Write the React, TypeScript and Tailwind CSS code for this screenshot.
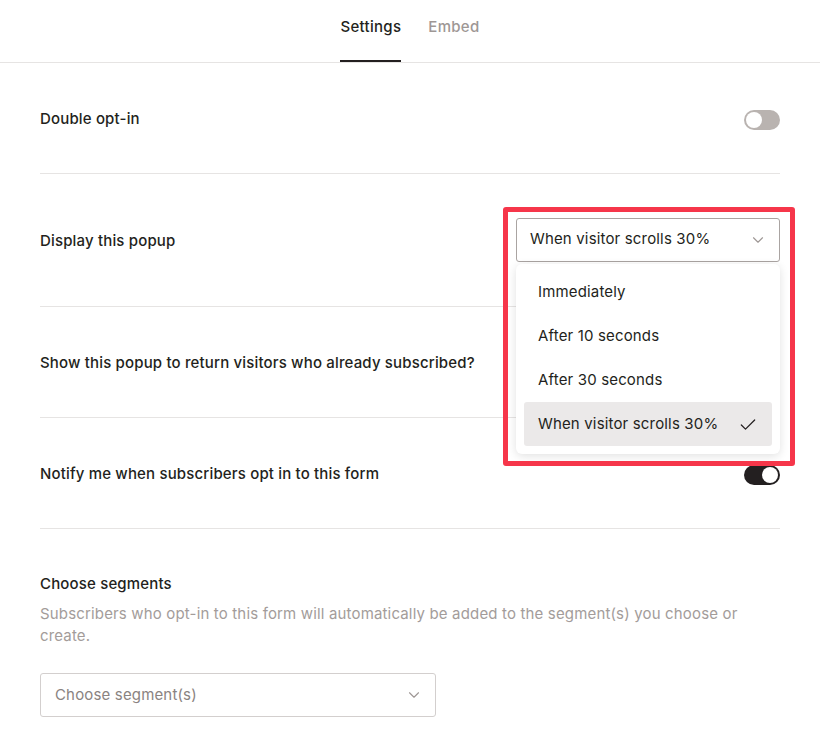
import { Check, ChevronDown } from 'lucide-react'

const font = { fontFamily: 'Inter, "Noto Sans", sans-serif' }

function Toggle({ on }: { on: boolean }) {
  return (
    <span
      className={`relative inline-flex h-5 w-9 shrink-0 items-center rounded-full ${
        on ? 'bg-[#231f20]' : 'bg-[#b9b3b0]'
      }`}
    >
      <span
        className={`absolute top-[2px] h-4 w-4 rounded-full bg-white ${on ? 'right-[2px]' : 'left-[2px]'}`}
      />
    </span>
  )
}

function Row({ label, children, className }: { label: string; children?: React.ReactNode; className?: string }) {
  return (
    <div className={`flex items-center justify-between border-b border-[#e6e4e3] pt-[3px] ${className ?? ''}`}>
      <span className="text-[15px] font-medium text-[#231f20]">{label}</span>
      {children}
    </div>
  )
}

const options = ['Immediately', 'After 10 seconds', 'After 30 seconds', 'When visitor scrolls 30%']

export default function App() {
  return (
    <div className="min-h-[751px] w-[831px] bg-white">
      <div className="w-[820px] tracking-[0.01em]" style={font}>
        <div className="flex h-[63px] justify-center gap-[27px] border-b border-[#e6e4e3]">
          <button className="relative flex h-full items-start pt-[16px] text-[15px] font-medium tracking-[0.02em] text-[#231f20]">
            Settings
            <span className="absolute bottom-0 left-0 right-0 h-[2px] bg-[#231f20]" />
          </button>
          <button className="flex h-full items-start pt-[16px] text-[15px] font-medium tracking-[0.02em] text-[#9e9795]">
            Embed
          </button>
        </div>

        <div className="px-10">
          <Row label="Double opt-in" className="h-[111px]">
            <Toggle on={false} />
          </Row>

          <Row label="Display this popup" className="relative h-[133px]">
            <div className="relative mt-[-4px] w-[264px]">
              <div className="flex h-[44px] items-center justify-between rounded-[3px] border border-[#aaa4a2] pl-[13px] pr-[12px] text-[15px] text-[#231f20]">
                When visitor scrolls 30%
                <ChevronDown size={18} strokeWidth={1.5} className="text-[#9e9795]" />
              </div>
              <div className="absolute left-0 top-[46px] z-10 w-[264px] rounded-[6px] bg-white px-2 pb-2 pt-[6px] shadow-[0_2px_10px_rgba(0,0,0,0.12)]">
                {options.map((o, i) => (
                  <div
                    key={o}
                    className={`flex h-[44px] items-center justify-between rounded-[3px] pl-[14px] pr-[14px] pt-[2px] text-[15px] text-[#231f20] ${
                      i === 3 ? 'bg-[#ebe9e9]' : ''
                    }`}
                  >
                    {o}
                    {i === 3 && <Check size={20} strokeWidth={1.5} />}
                  </div>
                ))}
              </div>
              <div className="pointer-events-none absolute -left-[13px] -top-[11px] z-20 h-[259px] w-[292px] rounded-[3px] border-[5px] border-[#f6364a]" />
            </div>
          </Row>

          <Row label="Show this popup to return visitors who already subscribed?" className="h-[111px]">
            <Toggle on={false} />
          </Row>

          <Row label="Notify me when subscribers opt in to this form" className="h-[111px]">
            <Toggle on />
          </Row>

          <div className="pt-[45px]">
            <h3 className="text-[15px] font-medium leading-[20px] text-[#231f20]">Choose segments</h3>
            <p className="mt-[9px] text-[15px] leading-[22px] text-[#a39c9a]">
              Subscribers who opt-in to this form will automatically be added to the segment(s) you choose or create.
            </p>
            <div className="mt-[26px] flex h-[44px] w-[396px] items-center justify-between rounded-[3px] border border-[#d3cfce] pl-[14px] pr-[12px] text-[15px] text-[#8a8381]">
              Choose segment(s)
              <ChevronDown size={18} strokeWidth={1.5} className="text-[#9e9795]" />
            </div>
          </div>
        </div>
      </div>
    </div>
  )
}
